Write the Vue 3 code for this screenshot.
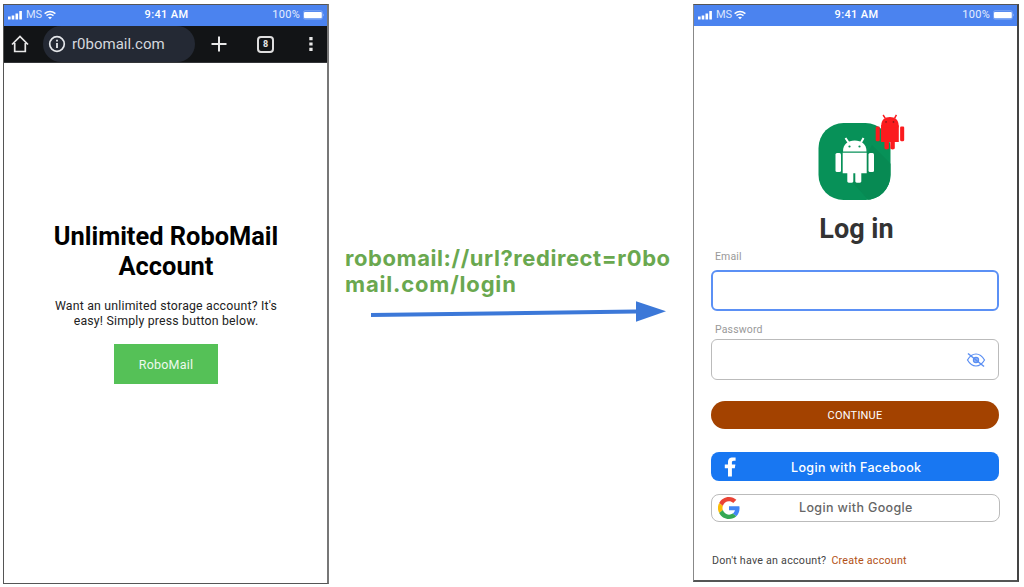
<script setup>
const phones = ['browser', 'login']
</script>

<template>
  <main class="stage">
    <section v-for="phone in phones" :key="phone" class="phone" :class="phone">
      <header class="status">
        <div class="carrier">
          <svg width="15" height="10" viewBox="0 0 15 10" fill="#fff">
            <path d="M0 6.500h2.600v3H0zM3.700 5.500h2.600v4H3.700zM7.500 3.500h2.600v6H7.500zM11.300 1h2.600v8.500h-2.600z" />
          </svg>
          <span class="ms">MS</span>
          <svg width="12" height="10" viewBox="0 0 12 10" fill="none" stroke="#fff" stroke-width="1.500">
            <path d="M.6 3.600Q6-.6 11.400 3.600M2.500 5.700Q6 3 9.500 5.700" />
            <path d="M4 7.300Q6 6 8 7.300L6 9.300z" fill="#fff" stroke="none" />
          </svg>
        </div>
        <span class="clock">9:41 AM</span>
        <div class="power">
          <span class="percent">100%</span>
          <svg width="22" height="10" viewBox="0 0 22 10">
            <rect x=".5" y=".8" width="18.800" height="8.400" rx="1.500" fill="none" stroke="#8fb3f7" stroke-width=".7" />
            <rect x="1" y="2" width="17.800" height="6.200" rx="1" fill="#fff" />
            <path d="M20.300 3.500q1.500 1.500 0 3z" fill="#a9c4f9" />
          </svg>
        </div>
      </header>

      <template v-if="phone === 'browser'">
        <nav class="toolbar">
          <svg class="home" width="18" height="18" viewBox="0 0 18 18" fill="none" stroke="#e8e8e8" stroke-width="1.700">
            <path d="M1 9.500 9 1.500l8 8M3.700 8v8.500h10.600V8" />
          </svg>
          <div class="address">
            <svg width="18" height="18" viewBox="0 0 18 18" fill="none" stroke="#e4e6ea">
              <circle cx="9" cy="9" r="7.300" stroke-width="1.700" />
              <path d="M9 8v5M9 4.700v1.700" stroke-width="1.800" />
            </svg>
            <span class="url">r0bomail.com</span>
          </div>
          <svg class="plus" width="16" height="16" viewBox="0 0 16 16" stroke="#e8e8e8" stroke-width="2">
            <path d="M.5 8h15M8 .5v15" />
          </svg>
          <div class="tabs">8</div>
          <svg class="dots" width="4" height="16" viewBox="0 0 4 16" fill="#e8e8e8">
            <path d="M.3 1h3.300v3.200H.3zM.3 6.400h3.300v3.200H.3zM.3 11.800h3.300V15H.3z" />
          </svg>
        </nav>
        <div class="offer">
          <h1>Unlimited RoboMail<br>Account</h1>
          <p>Want an unlimited storage account? It's<br>easy! Simply press button below.</p>
          <button class="go">RoboMail</button>
        </div>
      </template>

      <form v-else class="panel" @submit.prevent>
        <svg class="logo" width="90" height="88" viewBox="0 0 90 88">
          <defs>
            <clipPath id="tile"><rect x="2.500" y="9" width="72" height="77" rx="25" /></clipPath>
            <g id="robot">
              <path d="M13 5.500 10 1M25.500 5.500 28 1" fill="none" stroke="currentColor" stroke-width="2" />
              <path d="M7.500 14.500C7.500 7 12.500 3.500 19.200 3.500S31 7 31 14.500z" />
              <path d="M7.200 15.700h24v20.500h-5.400v8q0 1.500-3 1.500t-3-1.500v-8h-2v8q0 1.500-3 1.500t-3-1.500v-8H7.200z" />
              <rect x="0" y="16" width="5.500" height="19" rx="1.500" />
              <rect x="33" y="16" width="5.500" height="19" rx="1.500" />
            </g>
          </defs>
          <g clip-path="url(#tile)">
            <path d="M2 9h73v77H2z" fill="#079158" />
            <path d="M56 31 80 55v36H57L36 68z" fill="#078a53" />
          </g>
          <g transform="translate(19.500 23)" fill="#fff" color="#fff">
            <use href="#robot" />
            <circle cx="14" cy="9.500" r="1.100" fill="#079158" />
            <circle cx="24" cy="9.500" r="1.100" fill="#079158" />
          </g>
          <g transform="translate(59.700 .2) scale(.74 .77)" fill="#fb1b1e" color="#fb1b1e">
            <use href="#robot" />
            <path d="M7.200 14h24v3h-24z" />
            <circle cx="14" cy="10" r="1.200" fill="#8b1a1b" />
            <circle cx="24" cy="10" r="1.200" fill="#8b1a1b" />
          </g>
        </svg>
        <h2>Log in</h2>
        <label class="email-label">Email</label>
        <div class="field focused"></div>
        <label class="password-label">Password</label>
        <div class="field">
          <svg width="20" height="16" viewBox="0 0 20 16" fill="none" stroke="#5b8ff3" stroke-width="1.200">
            <path d="M1.500 8Q5 2 10 2t8.500 6Q15 14 10 14T1.500 8z" />
            <circle cx="10" cy="8" r="2.600" fill="#8fb2f7" />
            <path d="M2 1.500 18 14.500" stroke-width="1.500" />
          </svg>
        </div>
        <button class="continue">CONTINUE</button>
        <button class="social facebook">
          <svg width="13" height="20" viewBox="0 0 13 20" fill="#fff">
            <path d="M4 19.500v-8.200H.8V7.600H4V5.200C4 1.800 5.900.5 8.600.5h3v3.200H9.800C8.300 3.700 7.900 4.400 7.900 5.600v2h3.500l-.6 3.700H7.900v8.200z" />
          </svg>
          <span>Login with Facebook</span>
        </button>
        <button class="social google">
          <svg width="22" height="22" viewBox="0 0 48 48">
            <path fill="#ea4335" d="M24 9.500c3.540 0 6.710 1.220 9.210 3.600l6.850-6.850C35.900 2.380 30.470 0 24 0 14.620 0 6.510 5.380 2.560 13.220l7.980 6.190C12.430 13.720 17.740 9.500 24 9.500z" />
            <path fill="#4285f4" d="M46.980 24.550c0-1.570-.15-3.090-.38-4.550H24v9.020h12.940c-.58 2.960-2.260 5.480-4.780 7.180l7.730 6c4.510-4.180 7.090-10.360 7.090-17.650z" />
            <path fill="#fbbc05" d="M10.530 28.590A14.500 14.500 0 0 1 10.530 19.410l-7.980-6.190a24 24 0 0 0 0 21.560z" />
            <path fill="#34a853" d="M24 48c6.480 0 11.930-2.130 15.890-5.810l-7.730-6c-2.150 1.450-4.920 2.300-8.160 2.300-6.260 0-11.570-4.220-13.470-9.910l-7.980 6.190C6.510 42.620 14.620 48 24 48z" />
          </svg>
          <span>Login with Google</span>
        </button>
        <p class="signup"><span>Don't have an account?</span><a>Create account</a></p>
      </form>
    </section>

    <section class="redirect">
      <p><span class="first">robomail://url?redirect=r0bo</span><br><span class="second">mail.com/login</span></p>
      <svg width="297" height="24" viewBox="0 0 297 24">
        <path d="M1 15 266 11.500" stroke="#3c78d8" stroke-width="4" />
        <path d="M266 1.200v20.600L296 11.300z" fill="#3c78d8" />
      </svg>
    </section>
  </main>
</template>

<style>
body { background: #fff; overflow: hidden; }
</style>

<style scoped>
* { box-sizing: border-box; }
.stage {
  display: grid;
  grid-template-columns: 326px 364px 326px;
  align-items: start;
  width: 1024px;
  height: 587px;
  padding: 4px 0 0 3px;
  font-family: Roboto, sans-serif;
}
h1, h2, p { margin: 0; }
button { border: 0; padding: 0; font-family: inherit; }
svg { display: block; flex: none; }
span, a { white-space: nowrap; }

.phone { grid-row: 1; height: 580px; background: #fff; border: 1px solid #555; overflow: hidden; }
.browser { grid-column: 1; border-right: 2px solid #777; }
.login { grid-column: 3; height: 578px; border-right: 2px solid #444; border-bottom: 2px solid #555; border-left-color: #888; }

.status {
  display: grid;
  grid-template-columns: 1fr auto 1fr;
  align-items: center;
  height: 21px;
  padding: 0 2px 2px 4px;
  background: #4b83ef;
  color: #fff;
}
.carrier { display: flex; align-items: center; gap: 2px; }
.ms { margin-left: 1px; font-size: 11px; line-height: 12px; color: #dbe6fd; }
.clock { font-size: 11px; line-height: 12px; font-weight: 500; letter-spacing: .35px; }
.power { display: flex; align-items: center; justify-content: flex-end; gap: 3px; }
.percent { font-size: 11px; line-height: 12px; letter-spacing: .3px; color: #e6eefe; }

.toolbar { display: flex; align-items: center; height: 37px; padding-left: 7px; background: #121416; border-bottom: 1px solid #333538; }
.address { display: flex; align-items: center; width: 152px; height: 36px; margin-left: 14px; padding-left: 5px; gap: 6px; border-radius: 18px; background: #242934; }
.url { color: #d5d8de; font-size: 15px; }
.plus { margin-left: 16px; }
.tabs { display: grid; place-items: center; width: 17px; height: 17px; margin-left: 30px; border: 2px solid #dedede; border-radius: 4px; color: #e8e8e8; font-size: 9px; font-weight: 700; line-height: 10px; }
.dots { margin-left: 35px; }

.offer { display: flex; flex-direction: column; align-items: center; padding-top: 158px; text-align: center; color: #000; }
h1 { padding-left: 1px; font-size: 25.400px; line-height: 30px; font-weight: 700; }
.offer p { margin-top: 18px; padding-left: 1px; font-size: 12.300px; line-height: 15px; letter-spacing: .2px; color: #222; }
.go { width: 104px; height: 40px; margin-top: 15px; padding-left: 1px; background: #55c157; color: #edf9ed; font-size: 12.500px; letter-spacing: .2px; }

.redirect { grid-column: 2; grid-row: 1; padding: 241px 0 0 16px; color: #6aa84f; }
.redirect p { font-family: Inter, sans-serif; font-size: 22px; line-height: 26px; font-weight: 700; }
.first { letter-spacing: .57px; }
.second { letter-spacing: .82px; }
.redirect svg { margin: 3px 0 0 25px; }

.panel { display: flex; flex-direction: column; padding: 88px 18px 0 17px; }
.logo { margin-left: 105px; }
h2 { width: 291px; margin-top: 11px; font-size: 27px; line-height: 32px; font-weight: 700; text-align: center; color: #333; }
label { display: block; margin-left: 4px; font-size: 10.500px; line-height: 12px; letter-spacing: .15px; color: #999; }
.email-label { margin-top: 6px; }
.password-label { margin-top: 13px; }
.field { display: flex; align-items: center; justify-content: flex-end; width: 288px; height: 41px; margin-top: 3px; padding-right: 12px; border: 1.500px solid #bbb; border-radius: 6px; }
.focused { margin-top: 7px; border: 2px solid #5b90f5; }
.continue { width: 288px; height: 28px; margin-top: 21px; border-radius: 14px; background: #a34200; color: #fff; font-size: 11px; letter-spacing: .2px; }
.social { display: flex; align-items: center; width: 288px; height: 29px; margin-top: 23px; border-radius: 8px; background: #1877f2; color: #fff; font-family: Inter, sans-serif; font-size: 12.500px; font-weight: 500; letter-spacing: .36px; }
.facebook { padding-left: 13px; }
.facebook span { margin: 1px 0 0 54px; }
.google { width: 289px; height: 28px; margin-top: 13px; padding-left: 6px; background: #fff; border: 1px solid #bbb; color: #666; }
.google span { margin: -2px 0 0 59px; }
.signup { display: flex; gap: 5px; margin: 32px 0 0 1px; font-size: 10.700px; line-height: 13px; letter-spacing: .23px; color: #444; }
.signup a { color: #b25116; }
</style>
